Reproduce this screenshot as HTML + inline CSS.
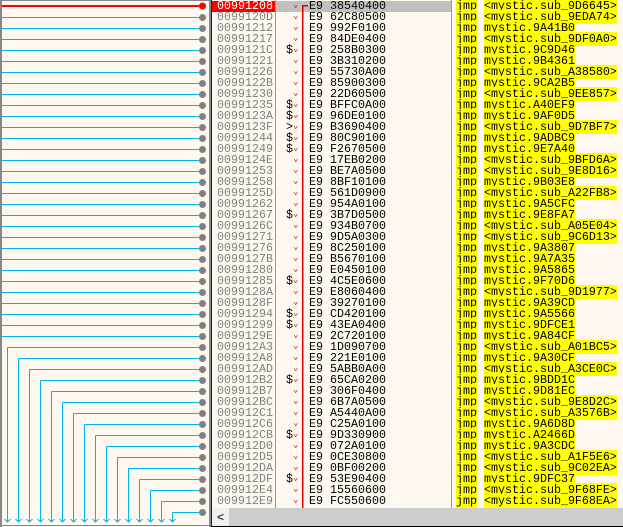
<!DOCTYPE html>
<html><head><meta charset="utf-8"><style>
body{margin:0;width:623px;height:527px;overflow:hidden;background:#fff8f0;position:relative;font-family:"Liberation Mono",monospace;font-size:11.67px}
#g{position:absolute;left:0;top:0}
.r{position:absolute;left:212px;width:411px;height:11px;line-height:11px;white-space:pre}
.r span{position:absolute;top:0}
.a{left:5px;color:#808080}
.m{left:74px;color:#000}
.c{left:81px;color:#e00000;font-size:9px;top:-1px!important}
.b{left:97px;color:#000}
.j{left:244px;color:#000}
.j i{font-style:normal;background:#ffff00}
.j b{font-weight:normal;background:#ffff00}
</style></head><body>
<div style="position:absolute;left:276px;top:1px;width:176px;height:11px;background:#c0c0c0"></div>
<div style="position:absolute;left:212px;top:1px;width:64px;height:11px;background:#ff0000"></div>
<svg id="g" width="623" height="527" shape-rendering="crispEdges">
<rect x="0" y="0" width="2" height="527" fill="#888"/>
<rect x="0" y="0" width="210" height="1" fill="#888"/>
<rect x="0" y="525" width="210" height="1" fill="#888"/>
<rect x="209" y="0" width="2" height="527" fill="#888"/>
<rect x="211" y="0" width="1" height="527" fill="#222"/>
<rect x="275" y="0" width="1" height="508" fill="#999"/>
<rect x="451" y="0" width="1" height="508" fill="#999"/>
<g stroke="#00b4f0" stroke-width="1" fill="none">
<path d="M2 17.5H199M2 28.5H199M2 39.5H199M2 50.5H199M2 61.5H199M2 72.5H199M2 83.5H199M2 94.5H199M2 105.5H199M2 116.5H199M2 127.5H199M2 138.5H199M2 149.5H199M2 160.5H199M2 171.5H199M2 182.5H199M2 193.5H199M2 204.5H199M2 215.5H199M2 226.5H199M2 237.5H199M2 248.5H199M2 259.5H199M2 270.5H199M2 281.5H199M2 292.5H199M2 303.5H199M2 314.5H199M2 325.5H199M2 336.5H199"/>
<path d="M7.5 347.5H199M18.5 358.5H199M29.5 369.5H199M40.5 380.5H199M51.5 391.5H199M62.5 402.5H199M73.5 413.5H199M84.5 424.5H199M95.5 435.5H199M106.5 446.5H199M117.5 457.5H199M128.5 468.5H199M139.5 479.5H199M150.5 490.5H199M161.5 501.5H199M172.5 512.5H199"/>
<path d="M7.5 347.5V522M18.5 358.5V522M29.5 369.5V522M40.5 380.5V522M51.5 391.5V522M62.5 402.5V522M73.5 413.5V522M84.5 424.5V522M95.5 435.5V522M106.5 446.5V522M117.5 457.5V522M128.5 468.5V522M139.5 479.5V522M150.5 490.5V522M161.5 501.5V522M172.5 512.5V522"/>
</g>
<g stroke="#00b4f0" stroke-width="1" fill="none" shape-rendering="auto">
<path d="M4.5 519L7.5 522L10.5 519M15.5 519L18.5 522L21.5 519M26.5 519L29.5 522L32.5 519M37.5 519L40.5 522L43.5 519M48.5 519L51.5 522L54.5 519M59.5 519L62.5 522L65.5 519M70.5 519L73.5 522L76.5 519M81.5 519L84.5 522L87.5 519M92.5 519L95.5 522L98.5 519M103.5 519L106.5 522L109.5 519M114.5 519L117.5 522L120.5 519M125.5 519L128.5 522L131.5 519M136.5 519L139.5 522L142.5 519M147.5 519L150.5 522L153.5 519M158.5 519L161.5 522L164.5 519M169.5 519L172.5 522L175.5 519"/>
</g>
<rect x="2" y="5" width="197" height="2" fill="#ff0000"/>
<g shape-rendering="auto">
<circle cx="202.5" cy="6" r="3.5" fill="#ff0000"/>
<g fill="#808080">
<circle cx="202.5" cy="17.5" r="3.5"/><circle cx="202.5" cy="28.5" r="3.5"/><circle cx="202.5" cy="39.5" r="3.5"/><circle cx="202.5" cy="50.5" r="3.5"/><circle cx="202.5" cy="61.5" r="3.5"/><circle cx="202.5" cy="72.5" r="3.5"/><circle cx="202.5" cy="83.5" r="3.5"/><circle cx="202.5" cy="94.5" r="3.5"/><circle cx="202.5" cy="105.5" r="3.5"/><circle cx="202.5" cy="116.5" r="3.5"/><circle cx="202.5" cy="127.5" r="3.5"/><circle cx="202.5" cy="138.5" r="3.5"/><circle cx="202.5" cy="149.5" r="3.5"/><circle cx="202.5" cy="160.5" r="3.5"/><circle cx="202.5" cy="171.5" r="3.5"/><circle cx="202.5" cy="182.5" r="3.5"/><circle cx="202.5" cy="193.5" r="3.5"/><circle cx="202.5" cy="204.5" r="3.5"/><circle cx="202.5" cy="215.5" r="3.5"/><circle cx="202.5" cy="226.5" r="3.5"/><circle cx="202.5" cy="237.5" r="3.5"/><circle cx="202.5" cy="248.5" r="3.5"/><circle cx="202.5" cy="259.5" r="3.5"/><circle cx="202.5" cy="270.5" r="3.5"/><circle cx="202.5" cy="281.5" r="3.5"/><circle cx="202.5" cy="292.5" r="3.5"/><circle cx="202.5" cy="303.5" r="3.5"/><circle cx="202.5" cy="314.5" r="3.5"/><circle cx="202.5" cy="325.5" r="3.5"/><circle cx="202.5" cy="336.5" r="3.5"/><circle cx="202.5" cy="347.5" r="3.5"/><circle cx="202.5" cy="358.5" r="3.5"/><circle cx="202.5" cy="369.5" r="3.5"/><circle cx="202.5" cy="380.5" r="3.5"/><circle cx="202.5" cy="391.5" r="3.5"/><circle cx="202.5" cy="402.5" r="3.5"/><circle cx="202.5" cy="413.5" r="3.5"/><circle cx="202.5" cy="424.5" r="3.5"/><circle cx="202.5" cy="435.5" r="3.5"/><circle cx="202.5" cy="446.5" r="3.5"/><circle cx="202.5" cy="457.5" r="3.5"/><circle cx="202.5" cy="468.5" r="3.5"/><circle cx="202.5" cy="479.5" r="3.5"/><circle cx="202.5" cy="490.5" r="3.5"/><circle cx="202.5" cy="501.5" r="3.5"/><circle cx="202.5" cy="512.5" r="3.5"/>
</g></g>
<rect x="302" y="5" width="1.5" height="503" fill="#e00000"/>
<rect x="302" y="5" width="6" height="1.5" fill="#e00000"/>
</svg>
<div class="r" style="top:1px"><span class="a" style="color:#fff">00991208</span><span class="c">⌄</span><span class="b">E9 38540400</span><span class="j"><b>jmp</b> <i>&lt;mystic.sub_9D6645&gt;</i></span></div>
<div class="r" style="top:12px"><span class="a">0099120D</span><span class="c">⌄</span><span class="b">E9 62C80500</span><span class="j"><b>jmp</b> <i>&lt;mystic.sub_9EDA74&gt;</i></span></div>
<div class="r" style="top:23px"><span class="a">00991212</span><span class="c">⌄</span><span class="b">E9 992F0100</span><span class="j"><b>jmp</b> <i>mystic.9A41B0</i></span></div>
<div class="r" style="top:34px"><span class="a">00991217</span><span class="c">⌄</span><span class="b">E9 84DE0400</span><span class="j"><b>jmp</b> <i>&lt;mystic.sub_9DF0A0&gt;</i></span></div>
<div class="r" style="top:45px"><span class="a">0099121C</span><span class="m">$</span><span class="c">⌄</span><span class="b">E9 258B0300</span><span class="j"><b>jmp</b> <i>mystic.9C9D46</i></span></div>
<div class="r" style="top:56px"><span class="a">00991221</span><span class="c">⌄</span><span class="b">E9 3B310200</span><span class="j"><b>jmp</b> <i>mystic.9B4361</i></span></div>
<div class="r" style="top:67px"><span class="a">00991226</span><span class="c">⌄</span><span class="b">E9 55730A00</span><span class="j"><b>jmp</b> <i>&lt;mystic.sub_A38580&gt;</i></span></div>
<div class="r" style="top:78px"><span class="a">0099122B</span><span class="c">⌄</span><span class="b">E9 85900300</span><span class="j"><b>jmp</b> <i>mystic.9CA2B5</i></span></div>
<div class="r" style="top:89px"><span class="a">00991230</span><span class="c">⌄</span><span class="b">E9 22D60500</span><span class="j"><b>jmp</b> <i>&lt;mystic.sub_9EE857&gt;</i></span></div>
<div class="r" style="top:100px"><span class="a">00991235</span><span class="m">$</span><span class="c">⌄</span><span class="b">E9 BFFC0A00</span><span class="j"><b>jmp</b> <i>mystic.A40EF9</i></span></div>
<div class="r" style="top:111px"><span class="a">0099123A</span><span class="m">$</span><span class="c">⌄</span><span class="b">E9 96DE0100</span><span class="j"><b>jmp</b> <i>mystic.9AF0D5</i></span></div>
<div class="r" style="top:122px"><span class="a">0099123F</span><span class="m">&gt;</span><span class="c">⌄</span><span class="b">E9 B3690400</span><span class="j"><b>jmp</b> <i>&lt;mystic.sub_9D7BF7&gt;</i></span></div>
<div class="r" style="top:133px"><span class="a">00991244</span><span class="m">$</span><span class="c">⌄</span><span class="b">E9 80C90100</span><span class="j"><b>jmp</b> <i>mystic.9ADBC9</i></span></div>
<div class="r" style="top:144px"><span class="a">00991249</span><span class="m">$</span><span class="c">⌄</span><span class="b">E9 F2670500</span><span class="j"><b>jmp</b> <i>mystic.9E7A40</i></span></div>
<div class="r" style="top:155px"><span class="a">0099124E</span><span class="c">⌄</span><span class="b">E9 17EB0200</span><span class="j"><b>jmp</b> <i>&lt;mystic.sub_9BFD6A&gt;</i></span></div>
<div class="r" style="top:166px"><span class="a">00991253</span><span class="c">⌄</span><span class="b">E9 BE7A0500</span><span class="j"><b>jmp</b> <i>&lt;mystic.sub_9E8D16&gt;</i></span></div>
<div class="r" style="top:177px"><span class="a">00991258</span><span class="c">⌄</span><span class="b">E9 8BF10100</span><span class="j"><b>jmp</b> <i>mystic.9B03E8</i></span></div>
<div class="r" style="top:188px"><span class="a">0099125D</span><span class="c">⌄</span><span class="b">E9 561D0900</span><span class="j"><b>jmp</b> <i>&lt;mystic.sub_A22FB8&gt;</i></span></div>
<div class="r" style="top:199px"><span class="a">00991262</span><span class="c">⌄</span><span class="b">E9 954A0100</span><span class="j"><b>jmp</b> <i>mystic.9A5CFC</i></span></div>
<div class="r" style="top:210px"><span class="a">00991267</span><span class="m">$</span><span class="c">⌄</span><span class="b">E9 3B7D0500</span><span class="j"><b>jmp</b> <i>mystic.9E8FA7</i></span></div>
<div class="r" style="top:221px"><span class="a">0099126C</span><span class="c">⌄</span><span class="b">E9 934B0700</span><span class="j"><b>jmp</b> <i>&lt;mystic.sub_A05E04&gt;</i></span></div>
<div class="r" style="top:232px"><span class="a">00991271</span><span class="c">⌄</span><span class="b">E9 9D5A0300</span><span class="j"><b>jmp</b> <i>&lt;mystic.sub_9C6D13&gt;</i></span></div>
<div class="r" style="top:243px"><span class="a">00991276</span><span class="c">⌄</span><span class="b">E9 8C250100</span><span class="j"><b>jmp</b> <i>mystic.9A3807</i></span></div>
<div class="r" style="top:254px"><span class="a">0099127B</span><span class="c">⌄</span><span class="b">E9 B5670100</span><span class="j"><b>jmp</b> <i>mystic.9A7A35</i></span></div>
<div class="r" style="top:265px"><span class="a">00991280</span><span class="c">⌄</span><span class="b">E9 E0450100</span><span class="j"><b>jmp</b> <i>mystic.9A5865</i></span></div>
<div class="r" style="top:276px"><span class="a">00991285</span><span class="m">$</span><span class="c">⌄</span><span class="b">E9 4C5E0600</span><span class="j"><b>jmp</b> <i>mystic.9F70D6</i></span></div>
<div class="r" style="top:287px"><span class="a">0099128A</span><span class="c">⌄</span><span class="b">E9 E8060400</span><span class="j"><b>jmp</b> <i>&lt;mystic.sub_9D1977&gt;</i></span></div>
<div class="r" style="top:298px"><span class="a">0099128F</span><span class="c">⌄</span><span class="b">E9 39270100</span><span class="j"><b>jmp</b> <i>mystic.9A39CD</i></span></div>
<div class="r" style="top:309px"><span class="a">00991294</span><span class="m">$</span><span class="c">⌄</span><span class="b">E9 CD420100</span><span class="j"><b>jmp</b> <i>mystic.9A5566</i></span></div>
<div class="r" style="top:320px"><span class="a">00991299</span><span class="m">$</span><span class="c">⌄</span><span class="b">E9 43EA0400</span><span class="j"><b>jmp</b> <i>mystic.9DFCE1</i></span></div>
<div class="r" style="top:331px"><span class="a">0099129E</span><span class="c">⌄</span><span class="b">E9 2C720100</span><span class="j"><b>jmp</b> <i>mystic.9A84CF</i></span></div>
<div class="r" style="top:342px"><span class="a">009912A3</span><span class="c">⌄</span><span class="b">E9 1D090700</span><span class="j"><b>jmp</b> <i>&lt;mystic.sub_A01BC5&gt;</i></span></div>
<div class="r" style="top:353px"><span class="a">009912A8</span><span class="c">⌄</span><span class="b">E9 221E0100</span><span class="j"><b>jmp</b> <i>mystic.9A30CF</i></span></div>
<div class="r" style="top:364px"><span class="a">009912AD</span><span class="c">⌄</span><span class="b">E9 5ABB0A00</span><span class="j"><b>jmp</b> <i>&lt;mystic.sub_A3CE0C&gt;</i></span></div>
<div class="r" style="top:375px"><span class="a">009912B2</span><span class="m">$</span><span class="c">⌄</span><span class="b">E9 65CA0200</span><span class="j"><b>jmp</b> <i>mystic.9BDD1C</i></span></div>
<div class="r" style="top:386px"><span class="a">009912B7</span><span class="c">⌄</span><span class="b">E9 306F0400</span><span class="j"><b>jmp</b> <i>mystic.9D81EC</i></span></div>
<div class="r" style="top:397px"><span class="a">009912BC</span><span class="c">⌄</span><span class="b">E9 6B7A0500</span><span class="j"><b>jmp</b> <i>&lt;mystic.sub_9E8D2C&gt;</i></span></div>
<div class="r" style="top:408px"><span class="a">009912C1</span><span class="c">⌄</span><span class="b">E9 A5440A00</span><span class="j"><b>jmp</b> <i>&lt;mystic.sub_A3576B&gt;</i></span></div>
<div class="r" style="top:419px"><span class="a">009912C6</span><span class="c">⌄</span><span class="b">E9 C25A0100</span><span class="j"><b>jmp</b> <i>mystic.9A6D8D</i></span></div>
<div class="r" style="top:430px"><span class="a">009912CB</span><span class="m">$</span><span class="c">⌄</span><span class="b">E9 9D330900</span><span class="j"><b>jmp</b> <i>mystic.A2466D</i></span></div>
<div class="r" style="top:441px"><span class="a">009912D0</span><span class="c">⌄</span><span class="b">E9 072A0100</span><span class="j"><b>jmp</b> <i>mystic.9A3CDC</i></span></div>
<div class="r" style="top:452px"><span class="a">009912D5</span><span class="c">⌄</span><span class="b">E9 0CE30800</span><span class="j"><b>jmp</b> <i>&lt;mystic.sub_A1F5E6&gt;</i></span></div>
<div class="r" style="top:463px"><span class="a">009912DA</span><span class="c">⌄</span><span class="b">E9 0BF00200</span><span class="j"><b>jmp</b> <i>&lt;mystic.sub_9C02EA&gt;</i></span></div>
<div class="r" style="top:474px"><span class="a">009912DF</span><span class="m">$</span><span class="c">⌄</span><span class="b">E9 53E90400</span><span class="j"><b>jmp</b> <i>mystic.9DFC37</i></span></div>
<div class="r" style="top:485px"><span class="a">009912E4</span><span class="c">⌄</span><span class="b">E9 15560600</span><span class="j"><b>jmp</b> <i>&lt;mystic.sub_9F68FE&gt;</i></span></div>
<div class="r" style="top:496px"><span class="a">009912E9</span><span class="c">⌄</span><span class="b">E9 FC550600</span><span class="j"><b>jmp</b> <i>&lt;mystic.sub_9F68EA&gt;</i></span></div>
<div style="position:absolute;left:212px;top:508px;width:411px;height:18px;background:#cdcdcd"></div>
<div style="position:absolute;left:212px;top:508px;width:17px;height:18px;background:#f0f0f0;color:#444;font:bold 12px 'Liberation Sans',sans-serif;line-height:18px;text-align:center">&lt;</div>
<div style="position:absolute;left:211px;top:526px;width:412px;height:1px;background:#000"></div>
</body></html>
